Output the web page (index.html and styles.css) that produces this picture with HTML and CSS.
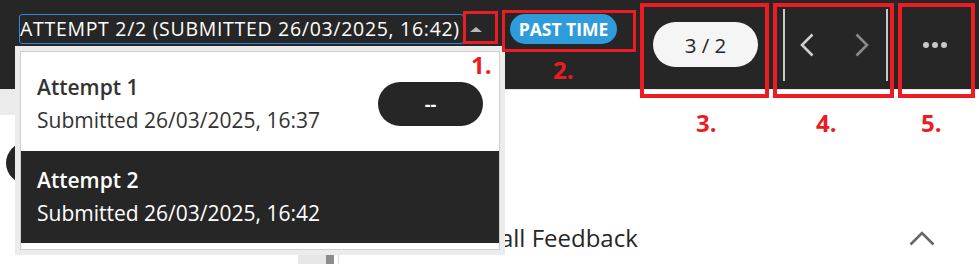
FILE: index.html
```html
<!DOCTYPE html>
<html lang="en">
<head>
<meta charset="utf-8">
<title>Attempt review</title>
<link rel="stylesheet" href="styles.css">
</head>
<body>
<div class="app">
  <header class="topbar">
    <div class="topbar-left">
      <div class="select"><span class="select-text">ATTEMPT 2/2 (SUBMITTED 26/03/2025, 16:42)</span></div>
      <span class="caret"></span>
      <span class="badge">PAST TIME</span>
    </div>
    <div class="topbar-right">
      <span class="count">3 / 2</span>
      <div class="nav">
        <svg class="chev prev" width="14" height="24" viewBox="0 0 14 24"><path d="M12.5 1.5 L2 12 L12.5 22.5" fill="none" stroke="currentColor" stroke-width="2.6"/></svg>
        <svg class="chev next" width="14" height="24" viewBox="0 0 14 24"><path d="M1.5 1.5 L12 12 L1.5 22.5" fill="none" stroke="currentColor" stroke-width="2.6"/></svg>
      </div>
      <div class="more">
        <span class="dot"></span><span class="dot"></span><span class="dot"></span>
      </div>
    </div>
  </header>
  <main class="main">
    <aside class="sidebar">
      <div class="sidebar-bar"></div>
      <div class="sidebar-btn"></div>
    </aside>
    <div class="scroll">
      <div class="track"></div>
      <div class="thumb"></div>
    </div>
    <section class="panel">
      <div class="panel-head">
        <h2 class="panel-title">Overall Feedback</h2>
        <svg class="collapse" width="26" height="15" viewBox="0 0 26 15"><path d="M1.5 13.5 L13 2 L24.5 13.5" fill="none" stroke="#666" stroke-width="2.6"/></svg>
      </div>
    </section>
  </main>

  <div class="menu">
    <div class="menu-item">
      <div class="menu-text">
        <div class="menu-title">Attempt 1</div>
        <div class="menu-sub">Submitted 26/03/2025, 16:37</div>
      </div>
      <span class="grade">--</span>
    </div>
    <div class="menu-item active">
      <div class="menu-text">
        <div class="menu-title">Attempt 2</div>
        <div class="menu-sub">Submitted 26/03/2025, 16:42</div>
      </div>
    </div>
  </div>

  <div class="mark mark-1"></div>
  <div class="mark mark-2"></div>
  <div class="mark mark-3"></div>
  <div class="mark mark-4"></div>
  <div class="mark mark-5"></div>
  <span class="label label-1">1.</span>
  <span class="label label-2">2.</span>
  <span class="label label-3">3.</span>
  <span class="label label-4">4.</span>
  <span class="label label-5">5.</span>
</div>
</body>
</html>
```

FILE: styles.css
```css
* { box-sizing: border-box; }
html, body { margin: 0; padding: 0; }
body {
  width: 979px;
  height: 264px;
  overflow: hidden;
  background: #fff;
  font-family: "Open Sans", "Noto Sans", sans-serif;
  color: #262626;
}
.app { position: relative; width: 979px; height: 264px; }

.topbar {
  height: 90px;
  background: #262626;
  display: flex;
  border-bottom: 1px solid #e6e6e6;
}
.topbar-left {
  display: flex;
  align-items: center;
  align-self: flex-start;
  padding: 14px 0 0 19px;
}
.select {
  width: 445px;
  height: 30px;
  border: 1px solid #2f86de;
  border-radius: 3px;
  overflow: hidden;
  white-space: nowrap;
}
.select-text {
  color: #fff;
  font-size: 19.5px;
  line-height: 28px;
  letter-spacing: 0.7px;
}
.caret {
  margin-left: 6px;
  width: 0; height: 0;
  border-left: 6px solid transparent;
  border-right: 6px solid transparent;
  border-bottom: 5px solid #b8b8b8;
}
.badge {
  margin-left: 28px;
  width: 107px;
  height: 30px;
  border-radius: 15px;
  background: #2f9bdb;
  color: #fff;
  font-weight: 700;
  font-size: 17.5px;
  display: flex;
  align-items: center;
  justify-content: center;
}

.topbar-right {
  margin-left: auto;
  display: flex;
  align-items: center;
}
.count {
  width: 105px;
  height: 45px;
  border-radius: 23px;
  background: #f5f5f5;
  color: #262626;
  font-size: 20.5px;
  display: flex;
  align-items: center;
  justify-content: center;
}
.nav {
  margin-left: 25px;
  width: 105px;
  height: 72px;
  border-left: 2px solid #c8c8c8;
  border-right: 2px solid #c8c8c8;
  display: flex;
  align-items: center;
  justify-content: space-between;
  padding: 0 17px 0 15px;
}
.chev.prev { color: #cfcfcf; }
.chev.next { color: #8a8a8a; }
.more {
  margin-left: 35px;
  margin-right: 32px;
  width: 24px;
  display: flex;
  justify-content: space-between;
}
.dot {
  width: 6px; height: 6px;
  border-radius: 50%;
  background: #c8c8c8;
}

.main {
  display: flex;
  height: 174px;
}
.sidebar { width: 298px; }
.sidebar-bar { height: 25px; background: #ebebeb; }
.sidebar-btn {
  margin: 27px 0 0 6px;
  width: 42px; height: 42px;
  border-radius: 50%;
  background: #262626;
}
.scroll { width: 41px; display: flex; border-right: 1px solid #dcdcdc; }
.track { width: 28px; background: #e7e7e7; }
.thumb { width: 8px; background: #8c8c8c; }

.panel { flex: 1; padding: 132px 44px 0 107px; }
.panel-head { display: flex; align-items: center; justify-content: space-between; }
.panel-title {
  margin: 0;
  font-size: 24px;
  font-weight: 400;
  line-height: 32px;
  color: #262626;
}

.menu {
  position: absolute;
  left: 20px;
  top: 51px;
  width: 480px;
  background: #fff;
  border: 1px solid #cfcfcf;
  padding-bottom: 6px;
  box-shadow: 0 0 0 5px #ececec;
}
.menu-item {
  display: flex;
  align-items: center;
  justify-content: space-between;
  padding: 19px 16px 14px 16px;
  color: #333;
}
.menu-item.active {
  background: #262626;
  color: #fff;
  padding: 13px 16px 13px 16px;
}
.menu-title { font-size: 21px; font-weight: 600; line-height: 33px; }
.menu-sub { font-size: 21px; line-height: 33px; }
.grade {
  width: 105px;
  height: 44px;
  border-radius: 22px;
  background: #262626;
  color: #fff;
  font-weight: 700;
  font-size: 18px;
  display: flex;
  align-items: center;
  justify-content: center;
}

.mark { position: absolute; border: 4px solid #ec1c24; }
.mark-1 { left: 463px; top: 11px; width: 35px; height: 33px; border-width: 3px; }
.mark-2 { left: 502px; top: 10px; width: 134px; height: 42px; border-width: 3.5px; }
.mark-3 { left: 640px; top: 3px; width: 129px; height: 95px; }
.mark-4 { left: 773px; top: 3px; width: 121px; height: 95px; }
.mark-5 { left: 898px; top: 3px; width: 77px; height: 95px; }
.label {
  position: absolute;
  color: #ec1c24;
  font-family: "Open Sans", sans-serif;
  font-weight: 700;
  font-size: 24px;
  line-height: 1;
}
.label-1 { left: 471px; top: 53px; }
.label-2 { left: 553px; top: 58px; }
.label-3 { left: 696px; top: 111px; }
.label-4 { left: 816px; top: 111px; }
.label-5 { left: 921px; top: 111px; }
```
